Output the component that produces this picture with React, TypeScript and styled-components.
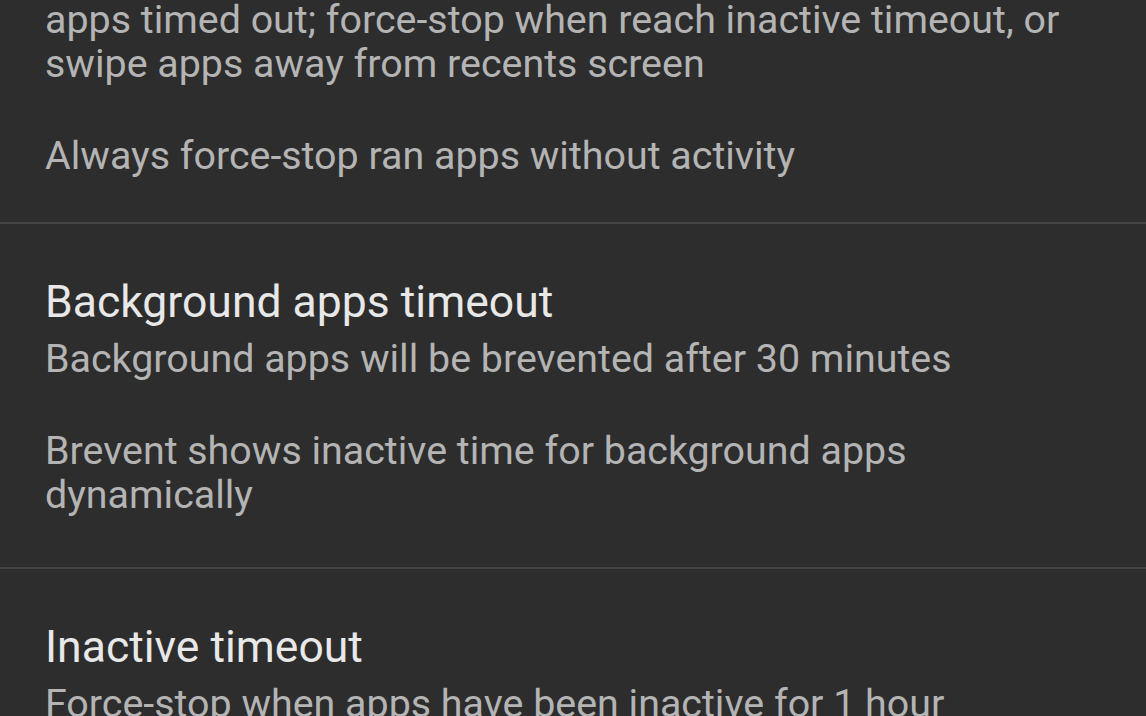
import React from "react";
import styled, { createGlobalStyle } from "styled-components";

type Pref = {
  title?: string;
  summary: string[];
};

const PREFS: Pref[] = [
  {
    summary: [
      "apps timed out; force-stop when reach inactive timeout, or swipe apps away from recents screen",
      "Always force-stop ran apps without activity",
    ],
  },
  {
    title: "Background apps timeout",
    summary: [
      "Background apps will be brevented after 30 minutes",
      "Brevent shows inactive time for background apps dynamically",
    ],
  },
  {
    title: "Inactive timeout",
    summary: ["Force-stop when apps have been inactive for 1 hour"],
  },
];

const App: React.FC = () => {
  return (
    <>
      <GlobalStyle />
      <Screen>
        <PrefList>
          {PREFS.map((pref, i) => (
            <PrefItem key={i} $first={i === 0}>
              {pref.title && <PrefTitle>{pref.title}</PrefTitle>}
              <PrefSummary>
                {pref.summary.map((para, j) => (
                  <Paragraph key={j}>{para}</Paragraph>
                ))}
              </PrefSummary>
            </PrefItem>
          ))}
        </PrefList>
      </Screen>
    </>
  );
};

const GlobalStyle = createGlobalStyle`
  html, body {
    margin: 0;
    padding: 0;
    background: #2d2d2d;
  }
  body {
    font-family: Roboto, "Noto Sans", "Liberation Sans", sans-serif;
    -webkit-font-smoothing: antialiased;
  }
`;

const Screen = styled.div`
  width: 1146px;
  height: 716px;
  overflow: hidden;
  background: #2d2d2d;
`;

// list is scrolled, so the first item starts above the top edge
const PrefList = styled.div`
  display: flex;
  flex-direction: column;
  margin-top: -2px;
`;

const PrefItem = styled.div<{ $first?: boolean }>`
  display: flex;
  flex-direction: column;
  padding: ${({ $first }) => ($first ? "0 45px 44px" : "52px 45px 50px")};
  border-bottom: 2px solid #444444;
`;

const PrefTitle = styled.div`
  color: #e8e8e8;
  font-size: 44.5px;
  line-height: 52px;
  font-weight: 400;
  margin-bottom: 9px;
`;

const PrefSummary = styled.div`
  display: flex;
  flex-direction: column;
  gap: 48px;
  color: #b4b4b4;
  font-size: 39.4px;
  line-height: 44px;
`;

const Paragraph = styled.div``;

export default App;
